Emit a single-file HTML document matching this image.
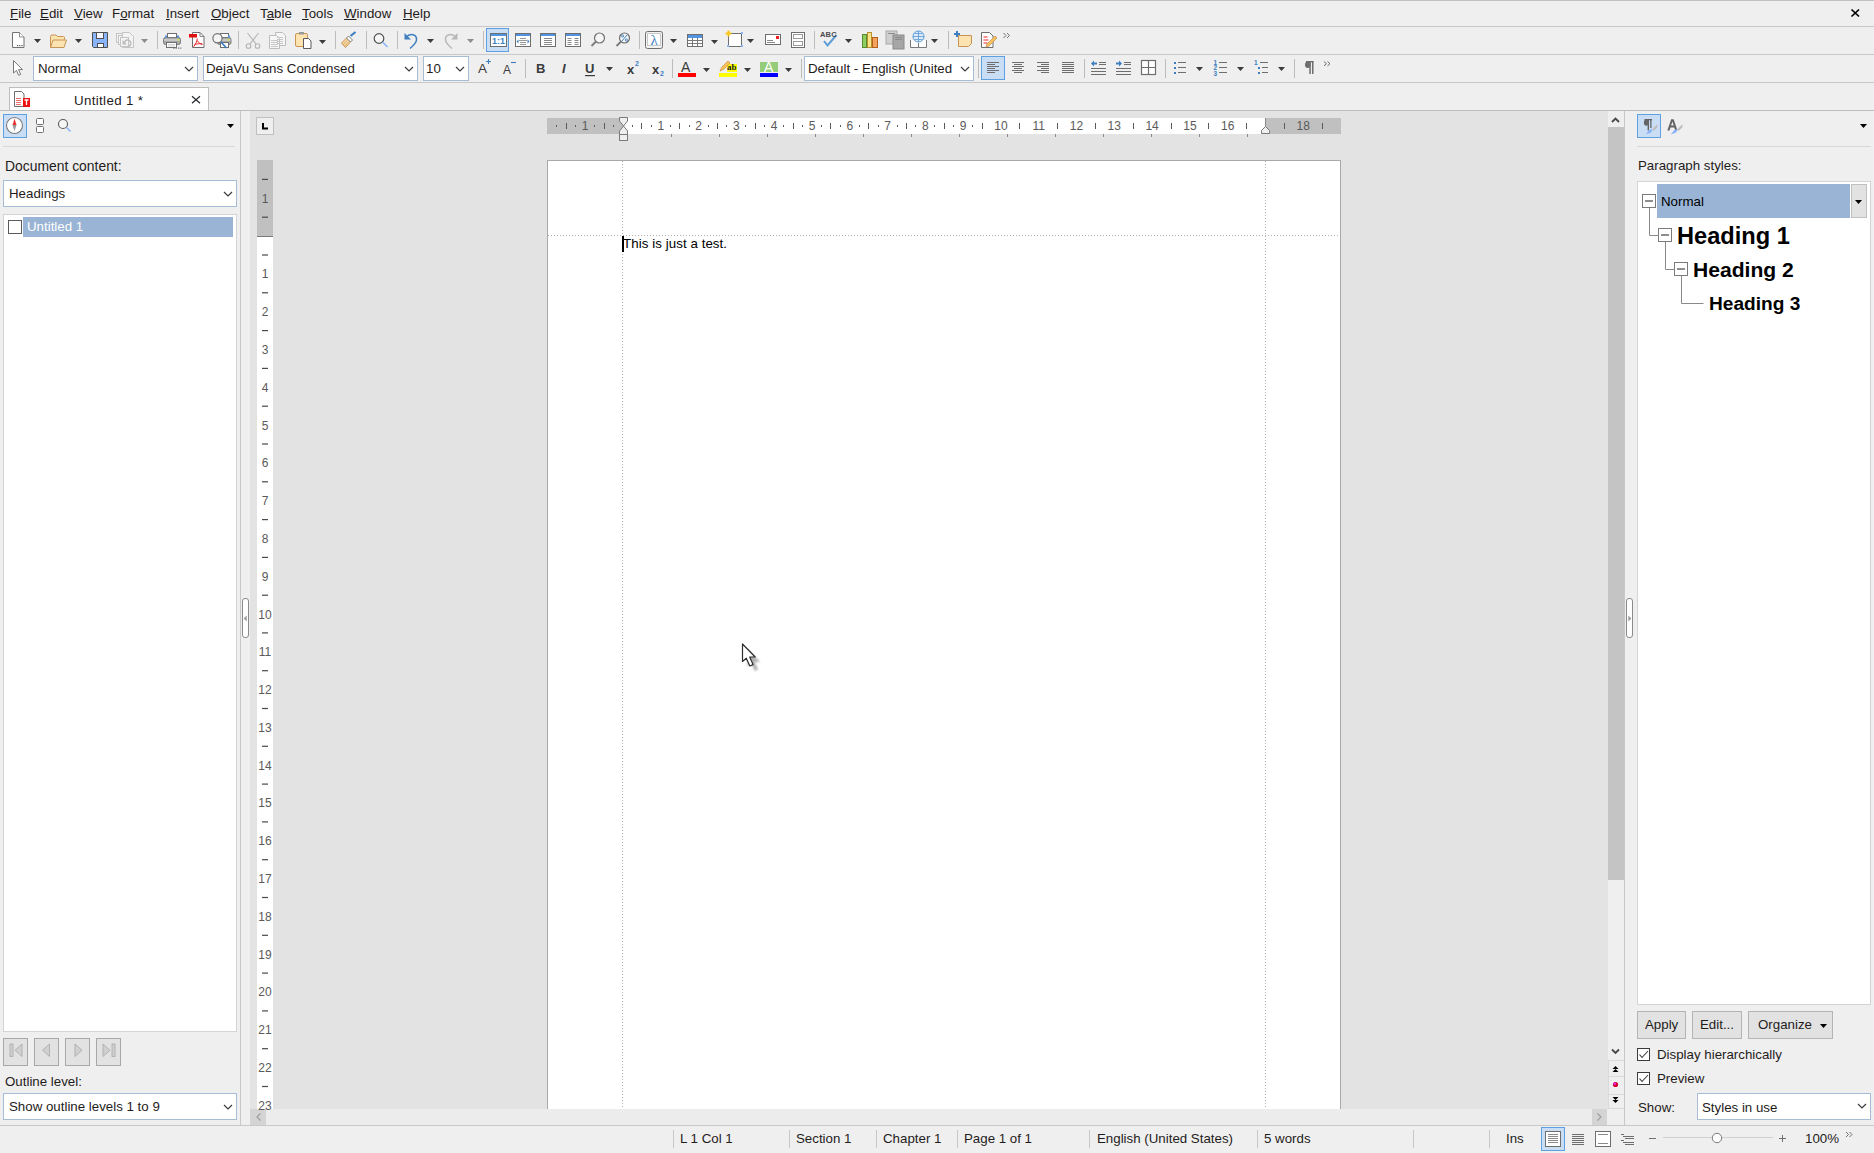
<!DOCTYPE html><html><head><meta charset="utf-8"><style>
*{margin:0;padding:0;box-sizing:border-box}
html,body{width:1874px;height:1153px;overflow:hidden;background:#efefef;position:relative;font-family:"Liberation Sans",sans-serif;font-size:13.3px;color:#232629}
.t{position:absolute;white-space:nowrap;line-height:16px}
#ov{position:absolute;left:0;top:0}
</style></head><body><div style="position:absolute;left:0px;top:0px;width:1874px;height:1px;background:#c0c0c0"></div>
<div class="t" style="left:10px;top:6px;color:#1f1c1b"><u>F</u>ile</div>
<div class="t" style="left:40px;top:6px;color:#1f1c1b"><u>E</u>dit</div>
<div class="t" style="left:74px;top:6px;color:#1f1c1b"><u>V</u>iew</div>
<div class="t" style="left:112px;top:6px;color:#1f1c1b">F<u>o</u>rmat</div>
<div class="t" style="left:166px;top:6px;color:#1f1c1b"><u>I</u>nsert</div>
<div class="t" style="left:211px;top:6px;color:#1f1c1b"><u>O</u>bject</div>
<div class="t" style="left:260px;top:6px;color:#1f1c1b">T<u>a</u>ble</div>
<div class="t" style="left:302px;top:6px;color:#1f1c1b"><u>T</u>ools</div>
<div class="t" style="left:344px;top:6px;color:#1f1c1b"><u>W</u>indow</div>
<div class="t" style="left:403px;top:6px;color:#1f1c1b"><u>H</u>elp</div>
<div style="position:absolute;left:0px;top:26px;width:1874px;height:1px;background:#c8c8c8"></div>
<div style="position:absolute;left:0px;top:54px;width:1874px;height:1px;background:#c8c8c8"></div>
<div style="position:absolute;left:0px;top:82px;width:1874px;height:1px;background:#c8c8c8"></div>
<div style="position:absolute;left:486px;top:28px;width:23px;height:24px;background:#c9def5;border:1px solid #5fa0e0"></div>
<div style="position:absolute;left:33px;top:56px;width:165px;height:25px;background:#fff;border:1px solid #a7bcd5"></div>
<div class="t" style="left:38px;top:61px;color:#1f1c1b">Normal</div>
<div style="position:absolute;left:203px;top:56px;width:215px;height:25px;background:#fff;border:1px solid #a7bcd5"></div>
<div class="t" style="left:206px;top:61px;color:#1f1c1b">DejaVu Sans Condensed</div>
<div style="position:absolute;left:423px;top:56px;width:46px;height:25px;background:#fff;border:1px solid #a7bcd5"></div>
<div class="t" style="left:426px;top:61px;color:#1f1c1b">10</div>
<div style="position:absolute;left:804px;top:56px;width:170px;height:25px;background:#fff;border:1px solid #a7bcd5"></div>
<div class="t" style="left:808px;top:61px;color:#1f1c1b">Default - English (United</div>
<div style="position:absolute;left:981px;top:56px;width:24px;height:24px;background:#c9def5;border:1px solid #5fa0e0"></div>
<div style="position:absolute;left:9px;top:87px;width:200px;height:24px;background:#fff;border:1px solid #bdbdbd;border-bottom:none"></div>
<div style="position:absolute;left:0px;top:110px;width:1874px;height:1px;background:#bdbdbd"></div>
<div class="t" style="left:74px;top:93px;color:#1f1c1b;letter-spacing:.35px">Untitled 1 *</div>
<div style="position:absolute;left:240px;top:111px;width:1px;height:1015px;background:#c8c8c8"></div>
<div style="position:absolute;left:250px;top:111px;width:1358px;height:998px;background:#e3e3e3"></div>
<div style="position:absolute;left:3px;top:114px;width:24px;height:24px;background:#c9def5;border:1px solid #5fa0e0"></div>
<div style="position:absolute;left:3px;top:146px;width:232px;height:1px;background:#d8d8d8"></div>
<div class="t" style="left:5px;top:158px;color:#1f1c1b;font-size:13.9px">Document content:</div>
<div style="position:absolute;left:3px;top:180px;width:234px;height:27px;background:#fff;border:1px solid #a7bcd5"></div>
<div class="t" style="left:9px;top:186px;color:#1f1c1b">Headings</div>
<div style="position:absolute;left:3px;top:214px;width:234px;height:818px;background:#fff;border:1px solid #d4d4d4"></div>
<div style="position:absolute;left:23px;top:217px;width:210px;height:20px;background:#99b4d4"></div>
<div style="position:absolute;left:8px;top:220px;width:14px;height:14px;background:#fff;border:1px solid #5a5a5a"></div>
<div class="t" style="left:27px;top:219px;color:#fff">Untitled 1</div>
<div style="position:absolute;left:3px;top:1038px;width:25px;height:28px;background:#e2e2e2;border:1px solid #a8a8a8"></div>
<div style="position:absolute;left:34px;top:1038px;width:25px;height:28px;background:#e2e2e2;border:1px solid #a8a8a8"></div>
<div style="position:absolute;left:65px;top:1038px;width:25px;height:28px;background:#e2e2e2;border:1px solid #a8a8a8"></div>
<div style="position:absolute;left:96px;top:1038px;width:25px;height:28px;background:#e2e2e2;border:1px solid #a8a8a8"></div>
<div class="t" style="left:5px;top:1074px;color:#1f1c1b">Outline level:</div>
<div style="position:absolute;left:3px;top:1093px;width:234px;height:27px;background:#fff;border:1px solid #a7bcd5"></div>
<div class="t" style="left:9px;top:1099px;color:#1f1c1b">Show outline levels 1 to 9</div>
<div style="position:absolute;left:0px;top:1125px;width:1874px;height:1px;background:#c8c8c8"></div>
<div style="position:absolute;left:673px;top:1130px;width:1px;height:18px;background:#c8c8c8"></div>
<div style="position:absolute;left:789px;top:1130px;width:1px;height:18px;background:#c8c8c8"></div>
<div style="position:absolute;left:876px;top:1130px;width:1px;height:18px;background:#c8c8c8"></div>
<div style="position:absolute;left:957px;top:1130px;width:1px;height:18px;background:#c8c8c8"></div>
<div style="position:absolute;left:1089px;top:1130px;width:1px;height:18px;background:#c8c8c8"></div>
<div style="position:absolute;left:1257px;top:1130px;width:1px;height:18px;background:#c8c8c8"></div>
<div style="position:absolute;left:1413px;top:1130px;width:1px;height:18px;background:#c8c8c8"></div>
<div style="position:absolute;left:1489px;top:1130px;width:1px;height:18px;background:#c8c8c8"></div>
<div class="t" style="left:680px;top:1131px;color:#1f1c1b">L 1 Col 1</div>
<div class="t" style="left:796px;top:1131px;color:#1f1c1b">Section 1</div>
<div class="t" style="left:883px;top:1131px;color:#1f1c1b">Chapter 1</div>
<div class="t" style="left:964px;top:1131px;color:#1f1c1b">Page 1 of 1</div>
<div class="t" style="left:1097px;top:1131px;color:#1f1c1b">English (United States)</div>
<div class="t" style="left:1264px;top:1131px;color:#1f1c1b">5 words</div>
<div class="t" style="left:1506px;top:1131px;color:#1f1c1b">Ins</div>
<div class="t" style="left:1805px;top:1131px;color:#1f1c1b">100%</div>
<div style="position:absolute;left:1541px;top:1127px;width:24px;height:24px;background:#c9def5;border:1px solid #5fa0e0"></div>
<div style="position:absolute;left:256px;top:117px;width:18px;height:18px;background:#efefef;border:1px solid #c0c0c0"></div>
<div style="position:absolute;left:547px;top:118px;width:794px;height:16px;background:#fff"></div>
<div style="position:absolute;left:547px;top:118px;width:76px;height:16px;background:#c0c0c0"></div>
<div style="position:absolute;left:1265px;top:118px;width:76px;height:16px;background:#c0c0c0"></div>
<div style="position:absolute;left:257px;top:160px;width:16px;height:949px;background:#fff"></div>
<div style="position:absolute;left:257px;top:160px;width:16px;height:76px;background:#c0c0c0"></div>
<div style="position:absolute;left:257px;top:236px;width:16px;height:1px;background:#7a7a7a"></div>
<div style="position:absolute;left:547px;top:160px;width:794px;height:949px;background:#fff;border:1px solid #a9a9a9;border-bottom:none"></div>
<div class="t" style="left:623px;top:236px;color:#000;font-size:13.3px;line-height:16px;letter-spacing:.07px">This is just a test.</div>
<div style="position:absolute;left:250px;top:1109px;width:1357px;height:16px;background:#ececec"></div>
<div style="position:absolute;left:250px;top:1109px;width:16px;height:16px;background:#d4d4d4"></div>
<div style="position:absolute;left:1592px;top:1109px;width:15px;height:16px;background:#d4d4d4"></div>
<div style="position:absolute;left:1608px;top:111px;width:16px;height:998px;background:#efefef"></div>
<div style="position:absolute;left:1608px;top:1109px;width:16px;height:16px;background:#efefef"></div>
<div style="position:absolute;left:1608px;top:127px;width:16px;height:753px;background:#c4c4c4"></div>
<div style="position:absolute;left:1608px;top:1060px;width:17px;height:17px;border:1px solid #dadada"></div>
<div style="position:absolute;left:1608px;top:1076px;width:17px;height:19px;border:1px solid #dadada"></div>
<div style="position:absolute;left:1608px;top:1094px;width:17px;height:15px;border:1px solid #dadada"></div>
<div style="position:absolute;left:1624px;top:111px;width:1px;height:1014px;background:#c8c8c8"></div>
<div style="position:absolute;left:1637px;top:114px;width:24px;height:24px;background:#c9def5;border:1px solid #5fa0e0"></div>
<div style="position:absolute;left:1637px;top:146px;width:234px;height:1px;background:#d8d8d8"></div>
<div class="t" style="left:1638px;top:158px;color:#1f1c1b">Paragraph styles:</div>
<div style="position:absolute;left:1637px;top:181px;width:234px;height:824px;background:#fff;border:1px solid #d4d4d4"></div>
<div style="position:absolute;left:1657px;top:184px;width:193px;height:34px;background:#99b4d4"></div>
<div style="position:absolute;left:1851px;top:184px;width:16px;height:34px;background:#e2e2e2;border:1px solid #c0c0c0"></div>
<div class="t" style="left:1661px;top:194px;color:#000">Normal</div>
<div class="t" style="left:1677px;top:222px;font-size:23.6px;font-weight:bold;color:#000;line-height:28px">Heading 1</div>
<div class="t" style="left:1693px;top:257px;font-size:21.1px;font-weight:bold;color:#000;line-height:26px">Heading 2</div>
<div class="t" style="left:1709px;top:292px;font-size:19.1px;font-weight:bold;color:#000;line-height:24px">Heading 3</div>
<div style="position:absolute;left:1637px;top:1011px;width:49px;height:28px;background:#e2e2e2;border:1px solid #b4b4b4"></div>
<div style="position:absolute;left:1692px;top:1011px;width:50px;height:28px;background:#e2e2e2;border:1px solid #b4b4b4"></div>
<div style="position:absolute;left:1748px;top:1011px;width:85px;height:28px;background:#e2e2e2;border:1px solid #b4b4b4"></div>
<div class="t" style="left:1645px;top:1017px;color:#1f1c1b">Apply</div>
<div class="t" style="left:1700px;top:1017px;color:#1f1c1b">Edit...</div>
<div class="t" style="left:1758px;top:1017px;color:#1f1c1b">Organize</div>
<div style="position:absolute;left:1637px;top:1048px;width:13px;height:13px;background:#fff;border:1px solid #3b3b3b"></div>
<div style="position:absolute;left:1637px;top:1072px;width:13px;height:13px;background:#fff;border:1px solid #3b3b3b"></div>
<div class="t" style="left:1657px;top:1047px;color:#1f1c1b">Display hierarchically</div>
<div class="t" style="left:1657px;top:1071px;color:#1f1c1b">Preview</div>
<div class="t" style="left:1638px;top:1100px;color:#1f1c1b">Show:</div>
<div style="position:absolute;left:1697px;top:1093px;width:174px;height:27px;background:#fff;border:1px solid #a7bcd5"></div>
<div class="t" style="left:1702px;top:1100px;color:#1f1c1b">Styles in use</div><svg id="ov" width="1874" height="1153" viewBox="0 0 1874 1153"><path d="M1851.5 9.5L1859 16.5M1859 9.5L1851.5 16.5" stroke="#000" stroke-width="1.7"/><path d="M12.5 32.5h7l4.5 4.5v10.5h-11.5z" fill="#fff" stroke="#737373"/><path d="M19.5 32.5v4.5h4.5" fill="#fff" stroke="#737373" stroke-width=".8"/><rect x="17" y="45" width="1.2" height="1.2" fill="#555"/><rect x="19.2" y="45" width="1.2" height="1.2" fill="#555"/><rect x="21.4" y="45" width="1.2" height="1.2" fill="#555"/><path d="M34 39h7l-3.5 4z" fill="#3b3b3b"/><path d="M50.5 47.5v-11a1.5 1.5 0 0 1 1.5-1.5h4l1.5 1.5h6a1 1 0 0 1 1 1v2" fill="#fde3b0" stroke="#c89455"/><path d="M50.5 47.5l2.5-7.5h13.5l-2.5 7.5z" fill="#fde3b0" stroke="#c89455"/><path d="M75 39h7l-3.5 4z" fill="#3b3b3b"/><path d="M92.5 32.5h15v15h-14l-1-1z" fill="#8ab4f8" stroke="#4f4f4f"/><rect x="96.5" y="32.5" width="7" height="6" fill="#f2f6fd" stroke="#4f4f4f"/><rect x="97.5" y="43.5" width="6" height="4" fill="#fff" stroke="#4f4f4f"/><g fill="#f4f4f4" stroke="#c4c4c4"><rect x="116.5" y="33.5" width="8" height="9"/><rect x="118.5" y="35.5" width="8" height="9"/><path d="M122.5 32.5h7l4 4v11h-11z"/><rect x="120.5" y="37.5" width="8" height="9"/></g><path d="M124.5 42.5a3.2 3.2 0 1 1 3 4" fill="none" stroke="#bcbcbc" stroke-width="1.4"/><path d="M122.5 40v4.5h4.5z" fill="#bcbcbc"/><path d="M141 39h7l-3.5 4z" fill="#8c8c8c"/><rect x="157" y="31" width="1" height="18" fill="#bcbcbc"/><rect x="167.5" y="33.5" width="9" height="5" fill="#fff" stroke="#6e6e6e"/><rect x="163.5" y="37.5" width="17" height="7" rx="2" fill="#a9a9a9" stroke="#7d7d7d"/><rect x="164" y="39" width="16" height="2" fill="#c8c8c8"/><rect x="166.5" y="42.5" width="10" height="5" fill="#fff" stroke="#6e6e6e"/><path d="M168 44.5h7M168 46h7" stroke="#c8c8c8" stroke-width=".8"/><rect x="165" y="35.5" width="2" height="2" fill="#5294e2"/><rect x="177" y="35.5" width="2" height="2" fill="#5294e2"/><path d="M178.5 38.5l1.3 1.3l-1.3 1.3l-1.3-1.3z" fill="#c8e040"/><rect x="173" y="47.5" width="1.5" height="1.2" fill="#7d7d7d"/><rect x="175.5" y="47.5" width="1.5" height="1.2" fill="#7d7d7d"/><rect x="178" y="47.5" width="1.5" height="1.2" fill="#7d7d7d"/><rect x="180.3" y="47.5" width="1.2" height="1.2" fill="#7d7d7d"/><path d="M192.5 32.5h7.5l4 4v11h-11.5z" fill="#fff" stroke="#6e6e6e"/><path d="M200 32.5v4h4" fill="none" stroke="#6e6e6e" stroke-width=".8"/><rect x="189" y="34" width="8" height="3.5" fill="#e01010"/><path d="M197.3 38.5c-.3 3-1.8 6-3.8 8.3M197.3 40.5c1 2 2.8 3.5 5.2 4M194.5 44.6c2.3-.8 5-1.2 7.8-.8" fill="none" stroke="#e22" stroke-width="1"/><rect x="220.5" y="33.5" width="8" height="5" fill="#fff" stroke="#6e6e6e"/><rect x="217.5" y="37.5" width="13.5" height="7" rx="2" fill="#a9a9a9" stroke="#7d7d7d"/><rect x="218" y="39" width="12.5" height="2" fill="#c8c8c8"/><rect x="220.5" y="42.5" width="8" height="5" fill="#fff" stroke="#6e6e6e"/><rect x="228" y="35.5" width="2" height="2" fill="#5294e2"/><path d="M228.5 38.5l1.3 1.3l-1.3 1.3l-1.3-1.3z" fill="#c8e040"/><circle cx="217.5" cy="38.3" r="4.6" fill="#f4f4f4" stroke="#6e6e6e" stroke-width="1.2"/><path d="M221 42l5.5 6" stroke="#3d7fc0" stroke-width="1.8"/><rect x="238" y="31" width="1" height="18" fill="#bcbcbc"/><g fill="none" stroke="#b4b4b4" stroke-width="1.1"><path d="M247.5 33l8.5 11M258.5 33l-8.5 11"/><circle cx="248.5" cy="46" r="2.3"/><circle cx="257.5" cy="46" r="2.3"/></g><g fill="#f6f6f6" stroke="#bcbcbc"><path d="M275.5 32.5h7l3 3v10h-10z"/><path d="M269.5 35.5h7l3 3v10h-10z"/></g><path d="M277 37.5h6M277 39.5h6M277 41.5h6M277 43.5h6M271 40.5h7M271 42.5h7M271 44.5h7M271 46.5h7" stroke="#c8c8c8"/><rect x="295.5" y="33.5" width="12" height="13" rx="1.5" fill="#fde3b0" stroke="#c89455"/><rect x="299" y="32" width="5" height="2.5" fill="#9a9a9a"/><path d="M303.5 38.5h5l2.5 2.5v7.5h-7.5z" fill="#fff" stroke="#5a5a5a"/><path d="M319 40h7l-3.5 4z" fill="#3b3b3b"/><rect x="335" y="31" width="1" height="18" fill="#bcbcbc"/><path d="M341.5 43l5-5l4 4l-5 5.5z" fill="#f7d9a0" stroke="#c89455"/><path d="M343 44.5l4-4M344.5 46l4-4" stroke="#c89455" stroke-width=".7"/><path d="M346.5 38l2-2l4 4l-2 2z" fill="#fff" stroke="#7d7d7d"/><path d="M350.5 36l5-4" stroke="#3d7fc0" stroke-width="2.2"/><rect x="366" y="31" width="1" height="18" fill="#bcbcbc"/><circle cx="379" cy="38.5" r="4.8" fill="#f6f6f6" stroke="#4f4f4f" stroke-width="1.2"/><path d="M382.5 42l5 5" stroke="#8ab4f8" stroke-width="1.6"/><rect x="397" y="31" width="1" height="18" fill="#bcbcbc"/><path d="M406 37.5c4-5 11-3 10.5 2.5c-.3 3-3 5.5-6.5 8.5" fill="none" stroke="#3d7fc0" stroke-width="1.5"/><path d="M404.5 33v6.5h6.5z" fill="#3d7fc0"/><path d="M427 39h7l-3.5 4z" fill="#3b3b3b"/><path d="M456 37.5c-4-5-11-3-10.5 2.5c.3 3 3 5.5 6.5 8.5" fill="none" stroke="#b8b8b8" stroke-width="1.5"/><path d="M457.5 33v6.5h-6.5z" fill="#b8b8b8"/><path d="M467 39h7l-3.5 4z" fill="#8c8c8c"/><rect x="483" y="31" width="1" height="18" fill="#bcbcbc"/><rect x="490.5" y="33.5" width="16" height="13" fill="#fff" stroke="#6e6e6e"/><rect x="491" y="34" width="15" height="2" fill="#5294e2"/><rect x="515.5" y="33.5" width="15" height="13" fill="#fff" stroke="#6e6e6e"/><rect x="516" y="34" width="14" height="2" fill="#5294e2"/><path d="M520 38.5h6M519 40.5h8M520 42.5h6M520 44.5h6" stroke="#9a9a9a"/><path d="M516.5 41.5l2-2v4zM529.5 41.5l-2-2v4z" fill="#3d7fc0"/><rect x="540.5" y="33.5" width="15" height="13" fill="#fff" stroke="#6e6e6e"/><rect x="541" y="34" width="14" height="2" fill="#5294e2"/><path d="M544 38.5h8M544 40.5h8M544 42.5h8M544 44.5h8" stroke="#8a8a8a"/><rect x="565.5" y="33.5" width="15" height="13" fill="#fff" stroke="#6e6e6e"/><rect x="566" y="34" width="14" height="2" fill="#5294e2"/><path d="M567.5 38.5h4M567.5 40.5h4M567.5 42.5h4M567.5 44.5h4M574.5 38.5h4M574.5 40.5h4M574.5 42.5h4M574.5 44.5h4" stroke="#8a8a8a"/><circle cx="599.5" cy="38" r="5" fill="#f6f6f6" stroke="#6e6e6e" stroke-width="1.2"/><path d="M596 41.5l-4.5 4.5" stroke="#7a7a7a" stroke-width="1.8"/><circle cx="624.5" cy="38" r="5" fill="#f6f6f6" stroke="#6e6e6e" stroke-width="1.2"/><path d="M621 41.5l-4.5 4.5" stroke="#7a7a7a" stroke-width="1.8"/><path d="M627 35l-5 6" stroke="#3d7fc0" stroke-width="1"/><circle cx="622.6" cy="36" r="1.1" fill="none" stroke="#3d7fc0" stroke-width=".9"/><circle cx="626.4" cy="40" r="1.1" fill="none" stroke="#3d7fc0" stroke-width=".9"/><rect x="639" y="31" width="1" height="18" fill="#bcbcbc"/><rect x="645.5" y="31.5" width="17" height="17" rx="2" fill="#f3f3f3" stroke="#6e6e6e"/><rect x="647.5" y="33.5" width="13" height="12" fill="#fff" stroke="#c8c8c8"/><text x="650.5" y="45" font-family="Liberation Serif" font-size="15" fill="#3d7fc0">&#955;</text><path d="M670 39h7l-3.5 4z" fill="#3b3b3b"/><rect x="687.5" y="34.5" width="15" height="12" fill="#fff" stroke="#6e6e6e"/><rect x="688" y="35" width="14" height="3" fill="#5294e2"/><path d="M688 40.5h14M688 43.5h14M692.5 38v8M697.5 38v8" stroke="#7a7a7a"/><path d="M711 40h7l-3.5 4z" fill="#3b3b3b"/><rect x="728.5" y="33.5" width="13" height="13" fill="#fff" stroke="#6e6e6e"/><path d="M728.5 30.5v6M725.5 33.5h6" stroke="#fcc419" stroke-width="2"/><rect x="741" y="32" width="2" height="2" fill="#8ab4f8"/><rect x="727" y="45" width="2" height="2" fill="#8ab4f8"/><rect x="741" y="45" width="2" height="2" fill="#8ab4f8"/><path d="M747 39h7l-3.5 4z" fill="#3b3b3b"/><rect x="765.5" y="34.5" width="15" height="10" fill="#fff" stroke="#6e6e6e"/><rect x="776" y="36" width="3" height="3" fill="#e22"/><path d="M767 40.5h6M767 42.5h8" stroke="#8a8a8a"/><rect x="791.5" y="32.5" width="13" height="15" fill="#fff" stroke="#6e6e6e"/><rect x="793.5" y="34.5" width="9" height="4" fill="none" stroke="#9a9a9a"/><rect x="793.5" y="41.5" width="9" height="4" fill="none" stroke="#9a9a9a"/><rect x="814" y="31" width="1" height="18" fill="#bcbcbc"/><path d="M824 41l3.5 4.5l9-10.5" fill="none" stroke="#5a9bd8" stroke-width="2"/><path d="M845 39h7l-3.5 4z" fill="#3b3b3b"/><rect x="862.5" y="34.5" width="4" height="13" fill="#8fce60" stroke="#5a8a30"/><rect x="867.5" y="32.5" width="4" height="15" fill="#fce38a" stroke="#b89030"/><rect x="872.5" y="37.5" width="5" height="10" fill="#f7a35c" stroke="#b06020"/><rect x="886" y="31" width="11" height="13" fill="#cfcfcf" stroke="#a9a9a9"/><rect x="893" y="35" width="11" height="14" fill="#a6a6a6" stroke="#8a8a8a"/><path d="M888 33.5h7M895 37.5h7M895 39.5h7" stroke="#8a8a8a"/><path d="M910.5 40v7.5h16v-7.5" fill="#fff" stroke="#7a7a7a"/><path d="M918.5 43v4.5" stroke="#7a7a7a"/><circle cx="918.5" cy="36.5" r="5.5" fill="#dbe9f8" stroke="#5a9bd8"/><path d="M913 36.5h11M918.5 31v11M914.5 33.5h8M914.5 39.5h8" stroke="#5a9bd8" stroke-width=".8"/><path d="M931 39h7l-3.5 4z" fill="#3b3b3b"/><rect x="948" y="31" width="1" height="18" fill="#bcbcbc"/><path d="M958.5 35.5h13v8l-3 3h-10z" fill="#fde3b0" stroke="#c89455"/><path d="M957 31v6M954 34h6" stroke="#3d7fc0" stroke-width="2"/><path d="M981.5 32.5h8l3.5 3.5v11.5h-11.5z" fill="#fff" stroke="#6e6e6e"/><path d="M983.5 37h4M983.5 40h5M983.5 43h4" stroke="#e22"/><path d="M986 47l1-3l8-8l2 2l-8 8z" fill="#f7c35c" stroke="#c89455" stroke-width=".8"/><path d="M1003.5 33l2.5 2.5l-2.5 2.5M1007 33l2.5 2.5l-2.5 2.5" fill="none" stroke="#6e6e6e"/><path d="M13.5 60.5v12.5l3-2.5l2.2 4.8l2-.9l-2.2-4.8h4z" fill="#fff" stroke="#7a7a7a" stroke-linejoin="round"/><path d="M185 67l4 4l4 -4" fill="none" stroke="#3b3b3b" stroke-width="1.2"/><path d="M405 67l4 4l4 -4" fill="none" stroke="#3b3b3b" stroke-width="1.2"/><path d="M456 67l4 4l4 -4" fill="none" stroke="#3b3b3b" stroke-width="1.2"/><path d="M961 67l4 4l4 -4" fill="none" stroke="#3b3b3b" stroke-width="1.2"/><path d="M486 61.5h5M488.5 59v5" stroke="#3d7fc0" stroke-width="1.1"/><path d="M511 62.5h5" stroke="#3d7fc0" stroke-width="1.1"/><rect x="525" y="59" width="1" height="19" fill="#bcbcbc"/><rect x="585" y="75" width="10" height="1.2" fill="#3b3b3b"/><path d="M606 67h7l-3.5 4z" fill="#3b3b3b"/><rect x="672" y="59" width="1" height="19" fill="#bcbcbc"/><rect x="678" y="73" width="18" height="4" fill="#f00"/><path d="M703 68h7l-3.5 4z" fill="#3b3b3b"/><rect x="727" y="64" width="10" height="8" fill="#ff0"/><path d="M720 71l2-4l6-6l2 2l-6 6z" fill="#f7c35c" stroke="#d09040" stroke-width=".8"/><rect x="719" y="73" width="18" height="4" fill="#ff0"/><path d="M744 68h7l-3.5 4z" fill="#3b3b3b"/><rect x="760" y="62" width="18" height="10" fill="#95cc7a"/><rect x="760" y="73" width="18" height="4" fill="#00f"/><path d="M785 68h7l-3.5 4z" fill="#3b3b3b"/><rect x="801" y="59" width="1" height="19" fill="#bcbcbc"/><rect x="978" y="59" width="1" height="19" fill="#bcbcbc"/><path d="M987 62.5h12M987 64.5h8M987 66.5h12M987 68.5h8M987 70.5h12M987 72.5h8" stroke="#6e6e6e" stroke-width="1"/><path d="M1012 62.5h12M1014 64.5h8M1012 66.5h12M1014 68.5h8M1012 70.5h12M1014 72.5h8" stroke="#6e6e6e" stroke-width="1"/><path d="M1037 62.5h12M1041 64.5h8M1037 66.5h12M1041 68.5h8M1037 70.5h12M1041 72.5h8" stroke="#6e6e6e" stroke-width="1"/><path d="M1062 62.5h12M1062 64.5h12M1062 66.5h12M1062 68.5h12M1062 70.5h12M1062 72.5h12" stroke="#6e6e6e" stroke-width="1"/><rect x="1084" y="59" width="1" height="19" fill="#bcbcbc"/><path d="M1099 62.5h7M1099 64.5h7M1091 68.5h15M1091 71.5h15M1091 74.5h15" stroke="#6e6e6e"/><path d="M1091 63.5l3-3v2h3v2h-3v2z" fill="#3d7fc0"/><path d="M1124 62.5h7M1124 64.5h7M1116 68.5h15M1116 71.5h15M1116 74.5h15" stroke="#6e6e6e"/><path d="M1122 63.5l-3-3v2h-3v2h3v2z" fill="#3d7fc0"/><rect x="1141.5" y="60.5" width="14" height="14" fill="#fff" stroke="#6e6e6e" stroke-width="1.2"/><path d="M1148.5 60.5v14M1141.5 67.5h14" stroke="#6e6e6e" stroke-width="1.2"/><rect x="1165" y="59" width="1" height="19" fill="#bcbcbc"/><path d="M1178 62.5h8M1178 67.5h8M1178 72.5h8" stroke="#6e6e6e"/><rect x="1174" y="62" width="2" height="2" fill="#3d7fc0"/><rect x="1174" y="67" width="2" height="2" fill="#3d7fc0"/><rect x="1174" y="72" width="2" height="2" fill="#3d7fc0"/><path d="M1196 67h7l-3.5 4z" fill="#3b3b3b"/><path d="M1219 62.5h8M1219 67.5h8M1219 72.5h8" stroke="#6e6e6e"/><g font-family="Liberation Sans" font-size="6.5" font-weight="bold" fill="#3d7fc0"><text x="1213.5" y="65">1</text><text x="1213.5" y="70">2</text><text x="1213.5" y="75.5">3</text></g><path d="M1237 67h7l-3.5 4z" fill="#3b3b3b"/><path d="M1260 62.5h8M1262 67.5h6M1262 72.5h6" stroke="#6e6e6e"/><text x="1254" y="65" font-family="Liberation Sans" font-size="6.5" font-weight="bold" fill="#3d7fc0">1</text><rect x="1258" y="67" width="2" height="2" fill="#3d7fc0"/><rect x="1258" y="72" width="2" height="2" fill="#3d7fc0"/><path d="M1278 67h7l-3.5 4z" fill="#3b3b3b"/><rect x="1294" y="59" width="1" height="19" fill="#bcbcbc"/><g fill="#6e6e6e"><ellipse cx="1307.8" cy="64.8" rx="2.8" ry="3.2"/><rect x="1306" y="61" width="7.5" height="1.4"/><rect x="1309.3" y="61" width="1.5" height="13"/><rect x="1312" y="61" width="1.5" height="13"/></g><path d="M1324 61.5l2.5 2.2l-2.5 2.2M1327.5 61.5l2.5 2.2l-2.5 2.2" fill="none" stroke="#6e6e6e"/><path d="M14.5 91.5h7l2.5 2.5v12.5h-9.5z" fill="#fff" stroke="#6e6e6e"/><path d="M16 98.5h5M16 100.5h5M16 102.5h5M16 104.5h5" stroke="#e86060" stroke-width=".9"/><rect x="23" y="98" width="7" height="9" fill="#e11"/><path d="M24.5 100h4M26.5 100v5" stroke="#fff" stroke-width="1.3"/><path d="M192 96.3L200 103.3M200 96.3L192 103.3" stroke="#232629" stroke-width="1.15"/><circle cx="14.5" cy="125.5" r="8" fill="#fff" stroke="#7a7a7a" stroke-width="1.1"/><path d="M14.5 118.5l-2 6.5h4z" fill="#e33"/><path d="M12.5 125l2 6.5l2-6.5z" fill="#9a9a9a"/><rect x="36.5" y="118.5" width="7" height="6" rx="1" fill="#fff" stroke="#6e6e6e"/><rect x="36.5" y="126.5" width="7" height="6" rx="1" fill="#fff" stroke="#6e6e6e"/><circle cx="63" cy="124" r="4.5" fill="#f6f6f6" stroke="#5a5a5a" stroke-width="1.1"/><path d="M66.5 127.5l4 4" stroke="#8ab4f8" stroke-width="1.6"/><path d="M227 124h7l-3.5 4z" fill="#000"/><path d="M224 192l4 4l4 -4" fill="none" stroke="#3b3b3b" stroke-width="1.2"/><g fill="#d0d0d0" stroke="#a8a8a8" stroke-width=".8"><rect x="10" y="1044" width="3" height="12.5"/><path d="M22 1044v12.5l-7-6.25z"/><path d="M49.5 1044v12.5l-7-6.25z"/><path d="M75 1044v12.5l7-6.25z"/><path d="M103 1044v12.5l7-6.25z"/><rect x="112" y="1044" width="3" height="12.5"/></g><path d="M224 1105l4 4l4 -4" fill="none" stroke="#3b3b3b" stroke-width="1.2"/><rect x="242.5" y="598.5" width="6" height="39" rx="2.5" fill="#fff" stroke="#8a8a8a"/><path d="M246.7 615.5v6l-3-3z" fill="#9a9a9a"/><rect x="1545.5" y="1131.5" width="15" height="15" fill="#fff" stroke="#6e6e6e"/><path d="M1548 1134.5h10M1548 1136.5h10M1548 1138.5h10M1548 1140.5h10M1548 1142.5h10" stroke="#8a8a8a"/><path d="M1572 1134.5h12M1572 1136.5h12M1572 1138.5h12M1572 1140.5h12M1572 1142.5h12M1572 1144.5h12" stroke="#6e6e6e"/><rect x="1595.5" y="1131.5" width="15" height="15" fill="#fff" stroke="#6e6e6e"/><path d="M1598 1143.5h10" stroke="#8a8a8a"/><path d="M1598 1134.5h10" stroke="#8a8a8a"/><path d="M1621 1134.5h3M1623 1136.5h11M1625 1138.5h9M1621 1140.5h3M1623 1142.5h11M1625 1144.5h9" stroke="#6e6e6e"/><path d="M1649 1138.5h7" stroke="#6e6e6e"/><path d="M1663 1137.5h110" stroke="#d0d0d0"/><circle cx="1717" cy="1138" r="4.7" fill="#fff" stroke="#7a7a7a"/><path d="M1779 1138.5h7M1782.5 1135v7" stroke="#6e6e6e"/><path d="M1846 1132l2.5 2.5l-2.5 2.5M1849.5 1132l2.5 2.5l-2.5 2.5" fill="none" stroke="#6e6e6e"/><path d="M263 123v5.5h5" fill="none" stroke="#000" stroke-width="2"/><rect x="556" y="125" width="1" height="2" fill="#5a5a5a"/><rect x="566" y="123" width="1" height="6" fill="#5a5a5a"/><rect x="575" y="125" width="1" height="2" fill="#5a5a5a"/><text x="585.2" y="129.5" font-size="12" fill="#5a5a5a" text-anchor="middle" font-family="Liberation Sans">1</text><rect x="594" y="125" width="1" height="2" fill="#5a5a5a"/><rect x="604" y="123" width="1" height="6" fill="#5a5a5a"/><rect x="613" y="125" width="1" height="2" fill="#5a5a5a"/><rect x="632" y="125" width="1" height="2" fill="#5a5a5a"/><rect x="641" y="123" width="1" height="6" fill="#5a5a5a"/><rect x="651" y="125" width="1" height="2" fill="#5a5a5a"/><text x="660.8" y="129.5" font-size="12" fill="#5a5a5a" text-anchor="middle" font-family="Liberation Sans">1</text><rect x="670" y="125" width="1" height="2" fill="#5a5a5a"/><rect x="679" y="123" width="1" height="6" fill="#5a5a5a"/><rect x="689" y="125" width="1" height="2" fill="#5a5a5a"/><text x="698.6" y="129.5" font-size="12" fill="#5a5a5a" text-anchor="middle" font-family="Liberation Sans">2</text><rect x="708" y="125" width="1" height="2" fill="#5a5a5a"/><rect x="717" y="123" width="1" height="6" fill="#5a5a5a"/><rect x="726" y="125" width="1" height="2" fill="#5a5a5a"/><text x="736.4" y="129.5" font-size="12" fill="#5a5a5a" text-anchor="middle" font-family="Liberation Sans">3</text><rect x="745" y="125" width="1" height="2" fill="#5a5a5a"/><rect x="755" y="123" width="1" height="6" fill="#5a5a5a"/><rect x="764" y="125" width="1" height="2" fill="#5a5a5a"/><text x="774.2" y="129.5" font-size="12" fill="#5a5a5a" text-anchor="middle" font-family="Liberation Sans">4</text><rect x="783" y="125" width="1" height="2" fill="#5a5a5a"/><rect x="793" y="123" width="1" height="6" fill="#5a5a5a"/><rect x="802" y="125" width="1" height="2" fill="#5a5a5a"/><text x="812.0" y="129.5" font-size="12" fill="#5a5a5a" text-anchor="middle" font-family="Liberation Sans">5</text><rect x="821" y="125" width="1" height="2" fill="#5a5a5a"/><rect x="830" y="123" width="1" height="6" fill="#5a5a5a"/><rect x="840" y="125" width="1" height="2" fill="#5a5a5a"/><text x="849.8" y="129.5" font-size="12" fill="#5a5a5a" text-anchor="middle" font-family="Liberation Sans">6</text><rect x="859" y="125" width="1" height="2" fill="#5a5a5a"/><rect x="868" y="123" width="1" height="6" fill="#5a5a5a"/><rect x="878" y="125" width="1" height="2" fill="#5a5a5a"/><text x="887.6" y="129.5" font-size="12" fill="#5a5a5a" text-anchor="middle" font-family="Liberation Sans">7</text><rect x="897" y="125" width="1" height="2" fill="#5a5a5a"/><rect x="906" y="123" width="1" height="6" fill="#5a5a5a"/><rect x="915" y="125" width="1" height="2" fill="#5a5a5a"/><text x="925.4" y="129.5" font-size="12" fill="#5a5a5a" text-anchor="middle" font-family="Liberation Sans">8</text><rect x="934" y="125" width="1" height="2" fill="#5a5a5a"/><rect x="944" y="123" width="1" height="6" fill="#5a5a5a"/><rect x="953" y="125" width="1" height="2" fill="#5a5a5a"/><text x="963.2" y="129.5" font-size="12" fill="#5a5a5a" text-anchor="middle" font-family="Liberation Sans">9</text><rect x="972" y="125" width="1" height="2" fill="#5a5a5a"/><rect x="982" y="123" width="1" height="6" fill="#5a5a5a"/><text x="1001.0" y="129.5" font-size="12" fill="#5a5a5a" text-anchor="middle" font-family="Liberation Sans">10</text><rect x="1019" y="123" width="1" height="6" fill="#5a5a5a"/><text x="1038.7" y="129.5" font-size="12" fill="#5a5a5a" text-anchor="middle" font-family="Liberation Sans">11</text><rect x="1057" y="123" width="1" height="6" fill="#5a5a5a"/><text x="1076.5" y="129.5" font-size="12" fill="#5a5a5a" text-anchor="middle" font-family="Liberation Sans">12</text><rect x="1095" y="123" width="1" height="6" fill="#5a5a5a"/><text x="1114.3" y="129.5" font-size="12" fill="#5a5a5a" text-anchor="middle" font-family="Liberation Sans">13</text><rect x="1133" y="123" width="1" height="6" fill="#5a5a5a"/><text x="1152.1" y="129.5" font-size="12" fill="#5a5a5a" text-anchor="middle" font-family="Liberation Sans">14</text><rect x="1171" y="123" width="1" height="6" fill="#5a5a5a"/><text x="1189.9" y="129.5" font-size="12" fill="#5a5a5a" text-anchor="middle" font-family="Liberation Sans">15</text><rect x="1208" y="123" width="1" height="6" fill="#5a5a5a"/><text x="1227.7" y="129.5" font-size="12" fill="#5a5a5a" text-anchor="middle" font-family="Liberation Sans">16</text><rect x="1246" y="123" width="1" height="6" fill="#5a5a5a"/><rect x="1284" y="123" width="1" height="6" fill="#5a5a5a"/><text x="1303.3" y="129.5" font-size="12" fill="#5a5a5a" text-anchor="middle" font-family="Liberation Sans">18</text><rect x="1322" y="123" width="1" height="6" fill="#5a5a5a"/><rect x="671" y="134" width="1" height="3" fill="#8a8a8a"/><rect x="719" y="134" width="1" height="3" fill="#8a8a8a"/><rect x="767" y="134" width="1" height="3" fill="#8a8a8a"/><rect x="815" y="134" width="1" height="3" fill="#8a8a8a"/><rect x="863" y="134" width="1" height="3" fill="#8a8a8a"/><rect x="911" y="134" width="1" height="3" fill="#8a8a8a"/><rect x="959" y="134" width="1" height="3" fill="#8a8a8a"/><rect x="1007" y="134" width="1" height="3" fill="#8a8a8a"/><rect x="1055" y="134" width="1" height="3" fill="#8a8a8a"/><rect x="1103" y="134" width="1" height="3" fill="#8a8a8a"/><rect x="1151" y="134" width="1" height="3" fill="#8a8a8a"/><rect x="1199" y="134" width="1" height="3" fill="#8a8a8a"/><rect x="1247" y="134" width="1" height="3" fill="#8a8a8a"/><path d="M619.5 117.5h8v3.5l-4 5l4 5v3.5h-8v-3.5l4-5l-4-5z" fill="#efefef" stroke="#7a7a7a"/><rect x="619.5" y="134.5" width="8" height="6" fill="#efefef" stroke="#7a7a7a"/><rect x="1265" y="118" width="1" height="9" fill="#8a8a8a"/><path d="M1261.5 133.5v-3l4-4l4 4v3z" fill="#efefef" stroke="#7a7a7a"/><rect x="262" y="178.8" width="6" height="1.2" fill="#4a4a4a"/><text x="265" y="202.7" font-size="12" fill="#5a5a5a" text-anchor="middle" font-family="Liberation Sans">1</text><rect x="262" y="216.6" width="6" height="1.2" fill="#4a4a4a"/><rect x="262" y="254.4" width="6" height="1.2" fill="#4a4a4a"/><text x="265" y="278.3" font-size="12" fill="#5a5a5a" text-anchor="middle" font-family="Liberation Sans">1</text><rect x="262" y="292.2" width="6" height="1.2" fill="#4a4a4a"/><text x="265" y="316.1" font-size="12" fill="#5a5a5a" text-anchor="middle" font-family="Liberation Sans">2</text><rect x="262" y="330.0" width="6" height="1.2" fill="#4a4a4a"/><text x="265" y="353.9" font-size="12" fill="#5a5a5a" text-anchor="middle" font-family="Liberation Sans">3</text><rect x="262" y="367.8" width="6" height="1.2" fill="#4a4a4a"/><text x="265" y="391.7" font-size="12" fill="#5a5a5a" text-anchor="middle" font-family="Liberation Sans">4</text><rect x="262" y="405.6" width="6" height="1.2" fill="#4a4a4a"/><text x="265" y="429.5" font-size="12" fill="#5a5a5a" text-anchor="middle" font-family="Liberation Sans">5</text><rect x="262" y="443.4" width="6" height="1.2" fill="#4a4a4a"/><text x="265" y="467.3" font-size="12" fill="#5a5a5a" text-anchor="middle" font-family="Liberation Sans">6</text><rect x="262" y="481.2" width="6" height="1.2" fill="#4a4a4a"/><text x="265" y="505.1" font-size="12" fill="#5a5a5a" text-anchor="middle" font-family="Liberation Sans">7</text><rect x="262" y="519.0" width="6" height="1.2" fill="#4a4a4a"/><text x="265" y="542.9" font-size="12" fill="#5a5a5a" text-anchor="middle" font-family="Liberation Sans">8</text><rect x="262" y="556.8" width="6" height="1.2" fill="#4a4a4a"/><text x="265" y="580.7" font-size="12" fill="#5a5a5a" text-anchor="middle" font-family="Liberation Sans">9</text><rect x="262" y="594.6" width="6" height="1.2" fill="#4a4a4a"/><text x="265" y="618.5" font-size="12" fill="#5a5a5a" text-anchor="middle" font-family="Liberation Sans">10</text><rect x="262" y="632.3" width="6" height="1.2" fill="#4a4a4a"/><text x="265" y="656.2" font-size="12" fill="#5a5a5a" text-anchor="middle" font-family="Liberation Sans">11</text><rect x="262" y="670.1" width="6" height="1.2" fill="#4a4a4a"/><text x="265" y="694.0" font-size="12" fill="#5a5a5a" text-anchor="middle" font-family="Liberation Sans">12</text><rect x="262" y="707.9" width="6" height="1.2" fill="#4a4a4a"/><text x="265" y="731.8" font-size="12" fill="#5a5a5a" text-anchor="middle" font-family="Liberation Sans">13</text><rect x="262" y="745.7" width="6" height="1.2" fill="#4a4a4a"/><text x="265" y="769.6" font-size="12" fill="#5a5a5a" text-anchor="middle" font-family="Liberation Sans">14</text><rect x="262" y="783.5" width="6" height="1.2" fill="#4a4a4a"/><text x="265" y="807.4" font-size="12" fill="#5a5a5a" text-anchor="middle" font-family="Liberation Sans">15</text><rect x="262" y="821.3" width="6" height="1.2" fill="#4a4a4a"/><text x="265" y="845.2" font-size="12" fill="#5a5a5a" text-anchor="middle" font-family="Liberation Sans">16</text><rect x="262" y="859.1" width="6" height="1.2" fill="#4a4a4a"/><text x="265" y="883.0" font-size="12" fill="#5a5a5a" text-anchor="middle" font-family="Liberation Sans">17</text><rect x="262" y="896.9" width="6" height="1.2" fill="#4a4a4a"/><text x="265" y="920.8" font-size="12" fill="#5a5a5a" text-anchor="middle" font-family="Liberation Sans">18</text><rect x="262" y="934.7" width="6" height="1.2" fill="#4a4a4a"/><text x="265" y="958.6" font-size="12" fill="#5a5a5a" text-anchor="middle" font-family="Liberation Sans">19</text><rect x="262" y="972.5" width="6" height="1.2" fill="#4a4a4a"/><text x="265" y="996.4" font-size="12" fill="#5a5a5a" text-anchor="middle" font-family="Liberation Sans">20</text><rect x="262" y="1010.3" width="6" height="1.2" fill="#4a4a4a"/><text x="265" y="1034.2" font-size="12" fill="#5a5a5a" text-anchor="middle" font-family="Liberation Sans">21</text><rect x="262" y="1048.1" width="6" height="1.2" fill="#4a4a4a"/><text x="265" y="1072.0" font-size="12" fill="#5a5a5a" text-anchor="middle" font-family="Liberation Sans">22</text><rect x="262" y="1085.9" width="6" height="1.2" fill="#4a4a4a"/><text x="265" y="1109.8" font-size="12" fill="#5a5a5a" text-anchor="middle" font-family="Liberation Sans">23</text><path d="M622.5 161v948M1265.5 161v948" stroke="#b0b0b0" stroke-dasharray="1 2"/><path d="M548 235.5h792" stroke="#b0b0b0" stroke-dasharray="1 2"/><rect x="622" y="236" width="2" height="16" fill="#000"/><defs><filter id="blr" x="-50%" y="-50%" width="200%" height="200%"><feGaussianBlur stdDeviation="1.2"/></filter></defs><path d="M742.5 644v17.5l3.8-3.3l3.5 7.8l3.3-1.4l-3.4-7.6h5.5z" fill="#000" opacity=".3" filter="url(#blr)" transform="translate(5,5)"/><path d="M742.5 644v17.5l3.8-3.3l3.5 7.8l3.3-1.4l-3.4-7.6h5.5z" fill="#fff" stroke="#2e2e2e" stroke-width="1.2" stroke-linejoin="round"/><path d="M260.5 1113.5l-3.5 3.5l3.5 3.5" fill="none" stroke="#a0a0a0" stroke-width="1.3"/><path d="M1597.5 1113.5l3.5 3.5l-3.5 3.5" fill="none" stroke="#a0a0a0" stroke-width="1.3"/><path d="M1612 122l3.5-3.5l3.5 3.5" fill="none" stroke="#4a4a4a" stroke-width="1.9"/><path d="M1612 1049.5l3.5 3.5l3.5-3.5" fill="none" stroke="#4a4a4a" stroke-width="1.9"/><path d="M1612.5 1069l3-3l3 3zM1612.5 1072l3-3l3 3z" fill="#000"/><circle cx="1615.5" cy="1084.5" r="2.6" fill="#d00030"/><circle cx="1614.8" cy="1083.8" r="1.3" fill="#f020e0"/><path d="M1612.5 1097l3 3l3-3zM1612.5 1100l3 3l3-3z" fill="#000"/><rect x="1626.5" y="598.5" width="6" height="39" rx="2.5" fill="#fff" stroke="#8a8a8a"/><path d="M1628.3 615.5v6l3-3z" fill="#9a9a9a"/><g fill="#646464"><ellipse cx="1646.3" cy="122.6" rx="2.4" ry="3.2"/><rect x="1644.5" y="119" width="7.6" height="1.3"/><rect x="1647.6" y="119" width="1.4" height="11.5"/><rect x="1650.2" y="119" width="1.3" height="9"/></g><path d="M1645.8 134.5L1649.3 130L1652.6 129L1651.2 132.6Z" fill="#8ab4f8"/><path d="M1652.6 129L1657.6 124L1657.2 127.6L1653.6 131Z" fill="#bdbdbd"/><path fill-rule="evenodd" fill="#646464" d="M1667.3 130.6L1671.2 119.2L1673.6 119.2L1677.5 130.6L1675.3 130.6L1674.3 127.5L1670.5 127.5L1669.5 130.6ZM1671.1 125.6L1673.7 125.6L1672.4 121.4Z"/><path d="M1670.8 134.5L1674.3 130L1677.6 129L1676.2 132.6Z" fill="#8ab4f8"/><path d="M1677.6 129L1682.6 124L1682.2 127.6L1678.6 131Z" fill="#bdbdbd"/><path d="M1860 124h7l-3.5 4z" fill="#000"/><path d="M1855 200h7l-3.5 4z" fill="#000"/><g fill="#fff" stroke="#7a7a7a"><rect x="1642.5" y="194.5" width="13" height="13"/><rect x="1658.5" y="228.5" width="13" height="13"/><rect x="1674.5" y="262.5" width="13" height="13"/></g><path d="M1645 201h8M1661 235h8M1677 269h8" stroke="#6a6a6a" stroke-width="1.6"/><path d="M1649.5 208v27.5h9M1665.5 242v27.5h9M1681.5 276v27.5h22" fill="none" stroke="#8a8a8a"/><path d="M1820 1024h7l-3.5 4z" fill="#000"/><path d="M1639.5 1054.5l2.5 3l6-6.5" fill="none" stroke="#3b3b3b" stroke-width="1.1"/><path d="M1639.5 1078.5l2.5 3l6-6.5" fill="none" stroke="#3b3b3b" stroke-width="1.1"/><path d="M1858 1104l4 4l4 -4" fill="none" stroke="#3b3b3b" stroke-width="1.2"/></svg><div class="t" style="left:492px;top:36px;font-size:9px;font-weight:bold;color:#3d7fc0;line-height:10px">1:1</div><div class="t" style="left:820px;top:30px;font-size:7.5px;font-weight:bold;color:#4a4a4a;line-height:9px;letter-spacing:.2px">ABC</div><div class="t" style="left:478px;top:61px;font-size:13.5px;color:#3b3b3b;line-height:16px">A</div><div class="t" style="left:503px;top:62px;font-size:12px;color:#3b3b3b;line-height:16px">A</div><div class="t" style="left:536px;top:61px;font-size:13px;font-weight:bold;color:#3b3b3b;line-height:16px">B</div><div class="t" style="left:562px;top:61px;font-size:13px;font-weight:bold;font-style:italic;color:#3b3b3b;line-height:16px">I</div><div class="t" style="left:585px;top:61px;font-size:13px;font-weight:bold;color:#3b3b3b;line-height:16px">U</div><div class="t" style="left:627px;top:62px;font-size:13px;font-weight:bold;color:#3b3b3b;line-height:16px">x</div><div class="t" style="left:635px;top:60px;font-size:7px;font-weight:bold;color:#3d7fc0;line-height:8px">2</div><div class="t" style="left:652px;top:62px;font-size:13px;font-weight:bold;color:#3b3b3b;line-height:16px">x</div><div class="t" style="left:660px;top:70px;font-size:7px;font-weight:bold;color:#3d7fc0;line-height:8px">2</div><div class="t" style="left:681px;top:59px;font-size:14px;color:#3b3b3b;line-height:16px">A</div><div class="t" style="left:727px;top:62px;font-size:9px;font-weight:bold;font-family:'Liberation Serif',serif;color:#222;line-height:10px">ab</div><div class="t" style="left:764px;top:59px;font-size:14px;color:#fff;line-height:16px">A</div></body></html>
